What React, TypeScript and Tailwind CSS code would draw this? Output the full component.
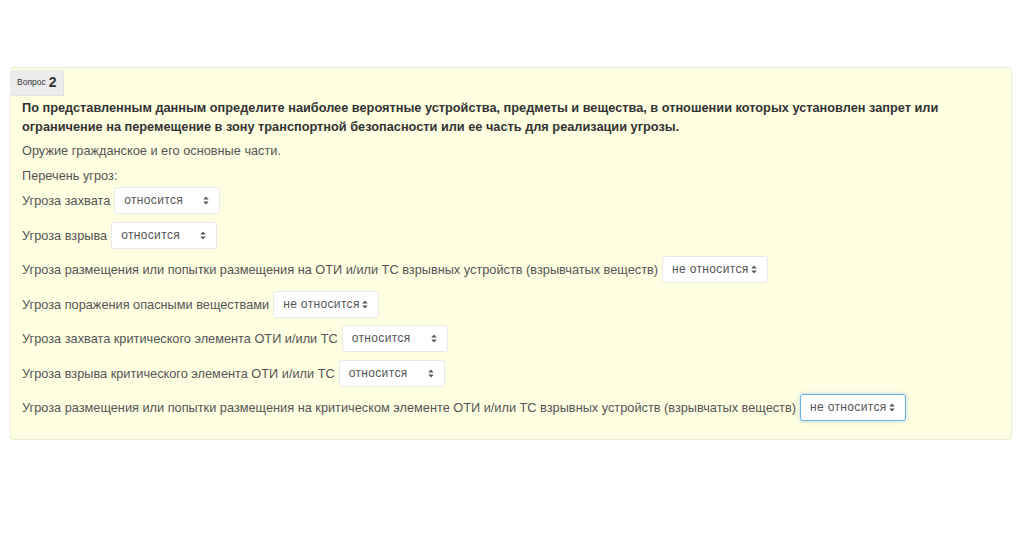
import React from 'react';

const rows: { label: string; value: string; focused?: boolean }[] = [
  { label: 'Угроза захвата', value: 'относится' },
  { label: 'Угроза взрыва', value: 'относится' },
  {
    label: 'Угроза размещения или попытки размещения на ОТИ и/или ТС взрывных устройств (взрывчатых веществ)',
    value: 'не относится',
  },
  { label: 'Угроза поражения опасными веществами', value: 'не относится' },
  { label: 'Угроза захвата критического элемента ОТИ и/или ТС', value: 'относится' },
  { label: 'Угроза взрыва критического элемента ОТИ и/или ТС', value: 'относится' },
  {
    label:
      'Угроза размещения или попытки размещения на критическом элементе ОТИ и/или ТС взрывных устройств (взрывчатых веществ)',
    value: 'не относится',
    focused: true,
  },
];

const Arrows = () => (
  <svg width="6" height="9" viewBox="0 0 6 9" className="shrink-0">
    <path d="M0.3 3.6 L3 0.6 L5.7 3.6 Z" fill="#555" />
    <path d="M0.3 5.4 L3 8.4 L5.7 5.4 Z" fill="#555" />
  </svg>
);

const FakeSelect = ({ value, focused }: { value: string; focused?: boolean }) => (
  <div
    className={
      focused
        ? 'ml-[4px] flex h-[27px] w-[106px] items-center justify-between rounded-[3px] border border-[#66afe9] bg-white pl-[9px] pr-[10px] text-[12px] text-[#555] shadow-[0_0_4px_rgba(102,175,233,0.5)]'
        : 'ml-[4px] flex h-[27px] w-[106px] items-center justify-between rounded-[3px] border border-[#e8e8e8] bg-white pl-[9px] pr-[10px] text-[12px] text-[#555]'
    }
  >
    <span className="tracking-[0.35px]">{value}</span>
    <Arrows />
  </div>
);

export default function App() {
  return (
    <div className="min-h-[556px] bg-white pt-[67px] pl-[10px] pr-[12px] font-['Liberation_Sans',Arial,sans-serif]">
      <div className="rounded-[3px] border border-[#ebebdc] bg-[#fefee0]">
        <div className="inline-flex h-[26px] items-center gap-[3px] rounded-tl-[3px] border-r border-b border-[#e2e2e2] bg-[#ececec] px-[6px] text-[#333]">
          <span className="text-[8.5px]">Вопрос</span>
          <span className="text-[14px] font-bold leading-none">2</span>
        </div>
        <div className="px-[11px] pt-[2px] pb-[18px] text-[12.75px] leading-[19px] text-[#555]">
          <p className="font-bold text-[#333]">
            По представленным данным определите наиболее вероятные устройства, предметы и вещества, в отношении которых
            установлен запрет или ограничение на перемещение в зону транспортной безопасности или ее часть для реализации
            угрозы.
          </p>
          <p className="mt-[5.5px]">Оружие гражданское и его основные части.</p>
          <p className="mt-[6px]">Перечень угроз:</p>
          <div className="mt-[2px] flex flex-col gap-[7.5px]">
            {rows.map((r) => (
              <div key={r.label} className="flex items-center">
                <span>{r.label}</span>
                <FakeSelect value={r.value} focused={r.focused} />
              </div>
            ))}
          </div>
        </div>
      </div>
    </div>
  );
}
